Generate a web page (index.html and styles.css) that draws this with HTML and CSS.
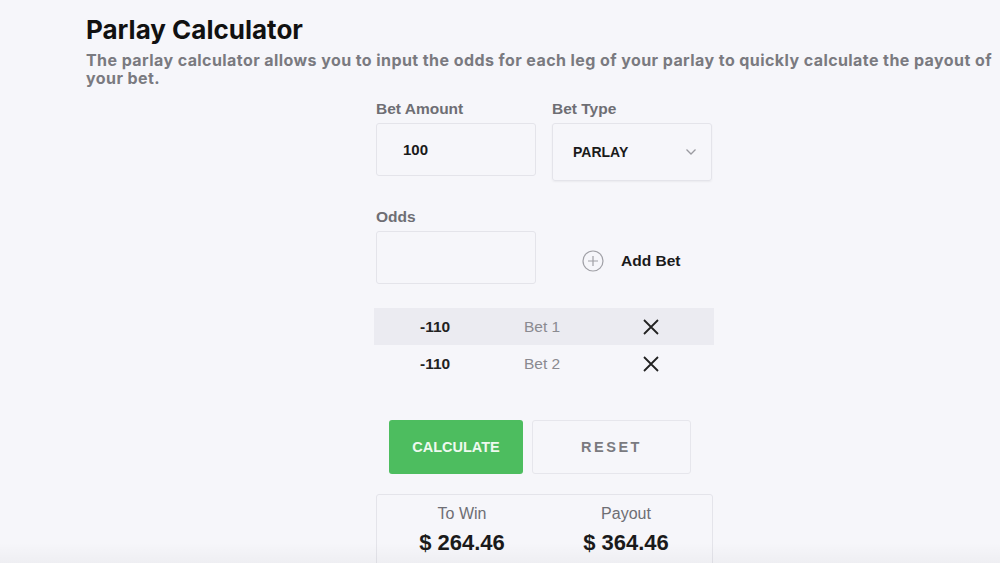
FILE: index.html
```html
<!DOCTYPE html>
<html lang="en">
<head>
  <meta charset="UTF-8" />
  <title>Parlay Calculator</title>
  <link rel="stylesheet" href="styles.css">
</head>
<body>
  <div class="page">
    <h1>Parlay Calculator</h1>
    <p class="intro">The parlay calculator allows you to input the odds for each leg of your parlay to quickly calculate the payout of your bet.</p>

    <div class="calc">
      <div class="fields">
        <div class="field">
          <label>Bet Amount</label>
          <div class="box">100</div>
        </div>
        <div class="field">
          <label>Bet Type</label>
          <div class="box select">
            PARLAY
            <svg width="12" height="8" viewBox="0 0 12 8"><path d="M1.5 1.5 6 6l4.5-4.5" fill="none" stroke="#9a9aa0" stroke-width="1.3"/></svg>
          </div>
        </div>
        <div class="field">
          <label>Odds</label>
          <div class="box"></div>
        </div>
        <div class="add">
          <svg width="22" height="22" viewBox="0 0 22 22"><circle cx="11" cy="11" r="10" fill="none" stroke="#a0a0a6" stroke-width="1.2"/><path d="M11 6v10M6 11h10" stroke="#a0a0a6" stroke-width="1.2"/></svg>
          <span>Add Bet</span>
        </div>
      </div>

      <div class="legs">
        <div class="leg shaded">
          <span class="odds">-110</span>
          <span class="name">Bet 1</span>
          <svg width="18" height="18" viewBox="0 0 18 18"><path d="M2 2l14 14M16 2 2 16" stroke="#222" stroke-width="1.8"/></svg>
        </div>
        <div class="leg">
          <span class="odds">-110</span>
          <span class="name">Bet 2</span>
          <svg width="18" height="18" viewBox="0 0 18 18"><path d="M2 2l14 14M16 2 2 16" stroke="#222" stroke-width="1.8"/></svg>
        </div>
      </div>

      <div class="buttons">
        <button class="btn-calc">CALCULATE</button>
        <button class="btn-reset">RESET</button>
      </div>

      <div class="result">
        <div class="res">
          <div class="res-label">To Win</div>
          <div class="res-value">$ 264.46</div>
        </div>
        <div class="res">
          <div class="res-label">Payout</div>
          <div class="res-value">$ 364.46</div>
        </div>
      </div>
    </div>
  </div>
  <div class="fade"></div>
</body>
</html>
```

FILE: styles.css
```css
body {
  margin: 0;
  background: #f6f6fa;
  font-family: 'Liberation Sans', Arial, sans-serif;
  color: #222;
  height: 563px;
  overflow: hidden;
  position: relative;
}
.page {
  padding: 13px 0 0 86px;
}
h1 {
  margin: 0;
  font-family: Inter, 'Noto Sans', sans-serif;
  font-weight: 700;
  font-size: 26px;
  line-height: 34px;
  color: #111;
}
.intro {
  margin: 4px 0 0;
  padding-right: 2px;
  font-family: Inter, 'Noto Sans', sans-serif;
  font-weight: 700;
  font-size: 16px;
  line-height: 18px;
  letter-spacing: 0.42px;
  color: #7a7a80;
}
.calc {
  width: 336px;
  margin: 13px auto 0;
  position: relative;
  left: 1px;
}
.fields {
  display: grid;
  grid-template-columns: 160px 160px;
  column-gap: 16px;
  row-gap: 27px;
  align-items: start;
}
.field label {
  display: block;
  font-size: 15.5px;
  font-weight: 600;
  color: #6e6e74;
  line-height: 18px;
  margin-bottom: 5px;
}
.box {
  box-sizing: border-box;
  height: 53px;
  border: 1px solid #e4e4ea;
  border-radius: 3px;
  padding: 17px 0 0 26px;
  font-size: 15px;
  font-weight: 700;
  color: #1a1a1a;
}
.select {
  height: 58px;
  padding: 0 14px 0 20px;
  display: flex;
  align-items: center;
  justify-content: space-between;
  font-size: 14px;
  box-shadow: 0 1px 2px rgba(0,0,0,0.05);
}
.add {
  display: flex;
  align-items: center;
  gap: 17px;
  padding: 42px 0 0 30px;
  font-size: 15.5px;
  font-weight: 700;
  color: #1a1a1a;
}
.legs {
  margin: 24px -2px 0;
}
.leg {
  height: 37px;
  display: grid;
  grid-template-columns: 150px 118px 72px;
  align-items: center;
}
.leg.shaded {
  background: #ebebf1;
}
.leg .odds {
  font-size: 15.5px;
  font-weight: 700;
  padding-left: 46px;
}
.leg .name {
  font-size: 15.5px;
  color: #8a8a90;
}
.buttons {
  display: flex;
  gap: 9px;
  margin: 38px 0 0 13px;
}
.buttons button {
  height: 54px;
  border-radius: 3px;
  font-family: 'Liberation Sans', Arial, sans-serif;
  font-weight: 700;
  font-size: 14.5px;
  cursor: pointer;
}
.btn-calc {
  width: 134px;
  background: #4dbd5f;
  border: none;
  color: #eef9ef;
}
.btn-reset {
  width: 159px;
  background: #f6f6fa;
  border: 1px solid #e6e6ec;
  color: #7a7a80;
  letter-spacing: 2.5px;
}
.result {
  margin-top: 20px;
  width: 337px;
  height: 80px;
  box-sizing: border-box;
  border: 1px solid #e4e4ea;
  border-radius: 3px;
  display: grid;
  grid-template-columns: 170px 158px;
  padding-top: 9px;
}
.res {
  text-align: center;
}
.res-label {
  font-size: 16px;
  color: #6e6e74;
  line-height: 20px;
}
.res-value {
  margin-top: 6px;
  font-size: 22px;
  font-weight: 700;
  color: #1a1a1a;
}
.fade {
  position: absolute;
  left: 0;
  right: 0;
  bottom: 0;
  height: 20px;
  background: linear-gradient(to bottom, rgba(0,0,0,0), rgba(0,0,0,0.03));
}
```
